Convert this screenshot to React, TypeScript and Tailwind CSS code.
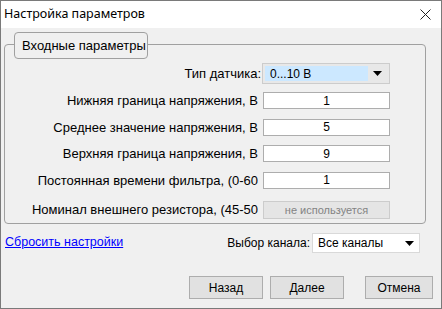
import React from "react";

const rows = [
  { label: "Нижняя граница напряжения, В", value: "1" },
  { label: "Среднее значение напряжения, В", value: "5" },
  { label: "Верхняя граница напряжения, В", value: "9" },
  { label: "Постоянная времени фильтра, (0-60", value: "1" },
];

function Arrow() {
  return (
    <svg width="9" height="5" viewBox="0 0 9 5">
      <path d="M0 0H9L4.5 5Z" fill="#000" />
    </svg>
  );
}

export default function App() {
  return (
    <div
      className="w-[442px] h-[309px] border border-[#7a7a7a] bg-[#f0f0f0] flex flex-col text-[12px] text-black"
      style={{ fontFamily: '"Liberation Sans", Arial, sans-serif' }}
    >
      {/* title bar */}
      <div className="h-[27px] bg-white flex items-center justify-between pl-[3px] pr-[10px]">
        <span className="text-[12.5px]" style={{ fontFamily: '"Noto Sans", sans-serif' }}>
          Настройка параметров
        </span>
        <svg width="11" height="11" viewBox="0 0 11 11">
          <path d="M0.5 0.5L10.5 10.5M10.5 0.5L0.5 10.5" stroke="#222" strokeWidth="1" />
        </svg>
      </div>

      {/* group box */}
      <div className="ml-[3px] mt-[16px] w-[422px] h-[180px] border border-[#a0a0a0] rounded-[4px] flex flex-col text-[13px]">
        <div className="-mt-[13px] ml-[9px] w-[134px] h-[27px] border border-[#a0a0a0] rounded-[4px] bg-[#f0f0f0] flex items-center pl-[7px]">
          Входные параметры
        </div>

        <div className="mt-[4px] flex items-center">
          <span className="w-[256px] text-right whitespace-nowrap">Тип датчика:</span>
          <div className="ml-[1px] w-[128px] h-[21px] border border-[#cccccc] bg-[#e8e8e8] flex items-center p-[2px] text-[12px]">
            <span className="flex-1 h-full bg-[#cce8ff] flex items-center pl-[5px]">0...10 В</span>
            <span className="w-[19px] flex justify-center">
              <Arrow />
            </span>
          </div>
        </div>

        <div className="mt-[7px] flex flex-col gap-[7px]">
          {rows.map((r) => (
            <div key={r.label} className="flex items-center">
              <span className="w-[253px] text-right whitespace-nowrap overflow-hidden">{r.label}</span>
              <div className="ml-[5px] w-[127px] h-[17px] border border-[#adadad] bg-white flex items-center justify-center text-[12px]">
                {r.value}
              </div>
            </div>
          ))}
        </div>

        <div className="mt-[10px] flex items-center">
          <span className="w-[253px] text-right whitespace-nowrap overflow-hidden">
            Номинал внешнего резистора, (45-50
          </span>
          <div className="ml-[5px] w-[127px] h-[18px] border border-[#cccccc] bg-[#e5e5e5] flex items-center justify-center text-[11px] text-[#838383]">
            не используется
          </div>
        </div>
      </div>

      {/* bottom row */}
      <div className="mt-[9px] h-[20px] flex items-center justify-between pl-[4px] pr-[21px]">
        <a href="#" className="text-[12.5px] text-[#0000ff] underline -mt-[2px]">
          Сбросить настройки
        </a>
        <div className="flex items-center">
          <span>Выбор канала:</span>
          <div className="ml-[2px] w-[108px] h-[20px] border border-[#d9d9d9] bg-white flex items-center justify-between pl-[5px] pr-[5px]">
            <span>Все каналы</span>
            <Arrow />
          </div>
        </div>
      </div>

      <div className="mt-[23px] flex justify-end pr-[8px]">
        <button className="w-[74px] h-[23px] border border-[#adadad] bg-[#e1e1e1] text-[12px]">Назад</button>
        <button className="ml-[7px] w-[74px] h-[23px] border border-[#adadad] bg-[#e1e1e1] text-[12px]">Далее</button>
        <button className="ml-[21px] w-[68px] h-[23px] border border-[#adadad] bg-[#e1e1e1] text-[12px]">Отмена</button>
      </div>
    </div>
  );
}
